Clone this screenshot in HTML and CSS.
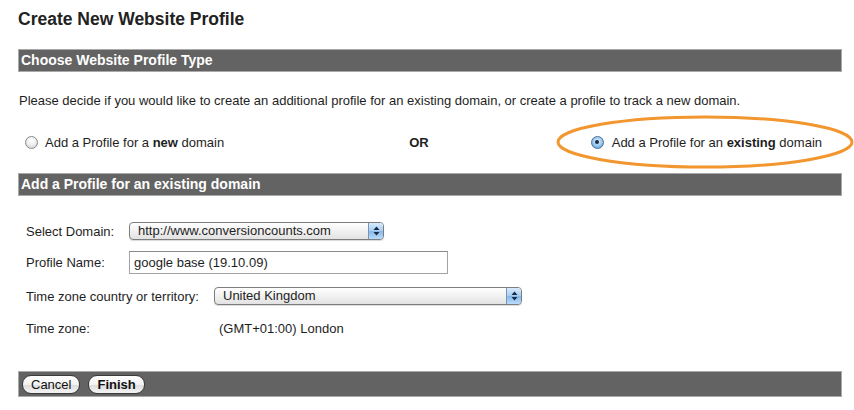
FILE: index.html
```html
<!DOCTYPE html>
<html>
<head>
<meta charset="utf-8">
<link rel="stylesheet" href="styles.css">
</head>
<body>
<div class="page">
  <h1 class="title">Create New Website Profile</h1>

  <div class="bar bar-first">Choose Website Profile Type</div>
  <p class="intro">Please decide if you would like to create an additional profile for an existing domain, or create a profile to track a new domain.</p>

  <div class="choice-row">
    <label class="choice choice-new"><span class="radio"></span><span class="choice-text">Add a Profile for a <b>new</b> domain</span></label>
    <span class="or">OR</span>
    <label class="choice choice-existing"><span class="radio radio-on"></span><span class="choice-text">Add a Profile for an <b>existing</b> domain</span>
      <svg class="ring" width="300" height="56" viewBox="0 0 300 56"><ellipse cx="149" cy="28" rx="147" ry="25" fill="none" stroke="#f2962f" stroke-width="3"/></svg>
    </label>
  </div>

  <div class="bar bar-second">Add a Profile for an existing domain</div>

  <div class="form">
    <div class="row row-domain">
      <span class="label label-short">Select Domain:</span>
      <div class="select select-domain"><span class="select-text">http://www.conversioncounts.com</span><span class="stepper"><svg width="7" height="10" viewBox="0 0 7 10"><path d="M3.5 0.5 L6.5 4 H0.5 Z M3.5 9.5 L6.5 6 H0.5 Z" fill="#1a2a44"/></svg></span></div>
    </div>
    <div class="row row-name">
      <span class="label label-short">Profile Name:</span>
      <div class="input">google base (19.10.09)</div>
    </div>
    <div class="row row-country">
      <span class="label label-long">Time zone country or territory:</span>
      <div class="select select-country"><span class="select-text">United Kingdom</span><span class="stepper"><svg width="7" height="10" viewBox="0 0 7 10"><path d="M3.5 0.5 L6.5 4 H0.5 Z M3.5 9.5 L6.5 6 H0.5 Z" fill="#1a2a44"/></svg></span></div>
    </div>
    <div class="row row-zone">
      <span class="label label-zone">Time zone:</span>
      <span class="value">(GMT+01:00) London</span>
    </div>
  </div>

  <div class="bar bar-actions">
    <span class="btn">Cancel</span>
    <span class="btn btn-primary">Finish</span>
  </div>
</div>
</body>
</html>
```

FILE: styles.css
```css
html, body {
  margin: 0;
  padding: 0;
  background: #ffffff;
}

body {
  font-family: "Liberation Sans", Arial, sans-serif;
  font-size: 13px;
  color: #1e1e1e;
}

.page {
  padding: 0 12px 0 18px;
  width: 824px;
}

.title {
  margin: 0;
  padding-top: 8px;
  font-size: 17.5px;
  line-height: 22px;
  font-weight: bold;
  color: #222;
}

.bar {
  background: #636363;
  border: 1px solid #a9a9a9;
  color: #ffffff;
  font-weight: bold;
  font-size: 14px;
  line-height: 21px;
  padding: 0 0 0 2px;
}

.bar-first {
  margin-top: 19px;
}

.intro {
  margin: 20px 0 0 1px;
  line-height: 18px;
}

.choice-row {
  display: flex;
  align-items: center;
  height: 20px;
  margin-top: 22px;
}

.choice {
  display: flex;
  align-items: center;
  white-space: nowrap;
}

.choice-new {
  margin-left: 7px;
}

.or {
  font-weight: bold;
  margin-left: 185px;
  color: #222;
}

.choice-existing {
  position: relative;
  margin-left: 162px;
}

.radio {
  display: inline-block;
  flex: none;
  width: 11px;
  height: 11px;
  border-radius: 50%;
  border: 1px solid #8a8a8a;
  background: radial-gradient(circle at 50% 35%, #ffffff 0%, #f0f0f0 45%, #c8c8c8 100%);
  margin-right: 7px;
  box-sizing: content-box;
  position: relative;
}

.radio-on {
  border-color: #4a6f9c;
  background: radial-gradient(circle at 50% 40%, #e8f4ff 0%, #9cc8f0 50%, #4f8fd0 100%);
  margin-right: 8px;
}

.radio-on::after {
  content: "";
  position: absolute;
  left: 3.5px;
  top: 3.5px;
  width: 4px;
  height: 4px;
  border-radius: 50%;
  background: #1b2a3c;
}

.ring {
  position: absolute;
  left: -35px;
  top: -21px;
  overflow: visible;
  pointer-events: none;
}

.bar-second {
  margin-top: 21px;
}

.form {
  padding-left: 8px;
  padding-top: 26px;
}

.row {
  display: flex;
  align-items: center;
}

.label {
  flex: none;
}

.label-short {
  width: 103px;
}

.label-long {
  width: 188px;
}

.label-zone {
  width: 193px;
}

.select {
  display: flex;
  align-items: center;
  height: 16px;
  border: 1px solid #7d7d7d;
  border-radius: 4px;
  background: linear-gradient(#ffffff, #eeeeee 60%, #e2e2e2);
  box-shadow: 0 1px 1px rgba(0,0,0,0.15);
  overflow: hidden;
}

.select-text {
  flex: 1;
  padding-left: 8px;
  line-height: 16px;
}

.stepper {
  width: 14px;
  height: 16px;
  border-left: 1px solid #7b93b5;
  background: linear-gradient(#d9ebfc, #a6ccf2 50%, #86b7ea 51%, #b9dcfa);
  display: flex;
  align-items: center;
  justify-content: center;
}

.select-domain {
  width: 253px;
}

.row-domain {
  height: 18px;
}

.row-name {
  margin-top: 11px;
}

.input {
  width: 313px;
  height: 21px;
  border: 1px solid #a3a3a3;
  border-top-color: #8a8a8a;
  line-height: 21px;
  padding-left: 4px;
  box-sizing: content-box;
}

.row-country {
  margin-top: 13px;
  height: 18px;
}

.select-country {
  width: 306px;
}

.row-zone {
  margin-top: 15px;
  height: 16px;
}

.bar-actions {
  margin-top: 35px;
  display: flex;
  align-items: center;
  gap: 8px;
  height: 24px;
  padding-left: 3px;
  font-weight: normal;
}

.btn {
  display: inline-block;
  height: 17px;
  line-height: 17px;
  padding: 0 8px;
  border: 1px solid #3a3a3a;
  border-radius: 9px;
  background: linear-gradient(#ffffff, #f2f2f2 50%, #dcdcdc 51%, #f4f4f4);
  color: #111;
  font-size: 13px;
}

.btn-primary {
  font-weight: bold;
}
```
